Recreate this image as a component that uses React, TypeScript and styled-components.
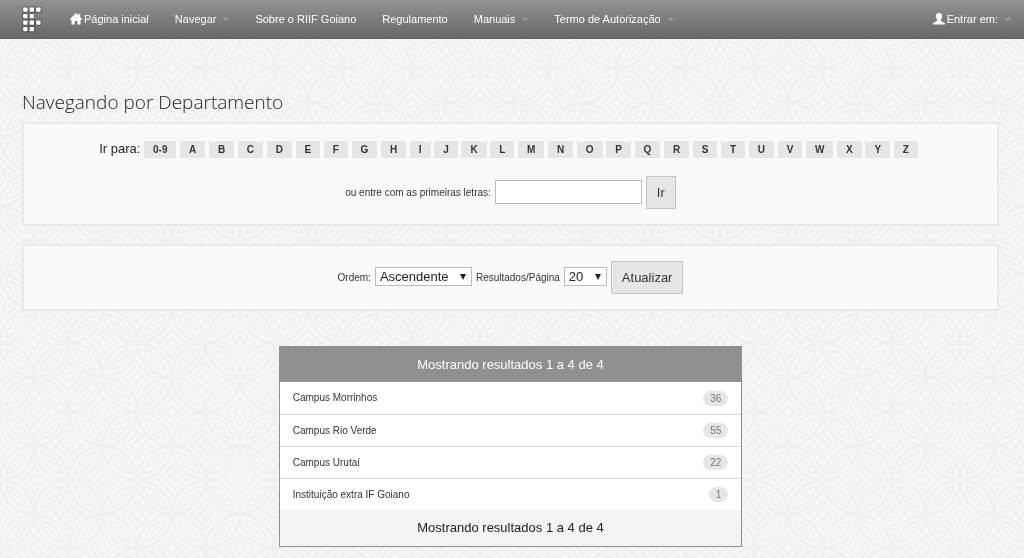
import React from "react";
import styled, { createGlobalStyle } from "styled-components";

const GlobalStyle = createGlobalStyle`
  *, *::before, *::after { box-sizing: border-box; }
  body {
    margin: 0;
    background: #f5f6f8;
    color: #333;
    font-family: "Liberation Sans", Helvetica, Arial, sans-serif;
    font-size: 13px;
    line-height: 18px;
  }
  a { color: inherit; text-decoration: none; }
  button, input, select { font: inherit; color: inherit; margin: 0; }
`;

/* ---------- background ornament ---------- */

const TILE = 68.57;
const HALF = TILE / 2;
const DARK = "#eff0f2";
const LIGHT = "#f6f7f9";

/* Petal shared by two circles of radius r whose centres are diagonal neighbours. */
function petal(ax: number, ay: number, bx: number, by: number, r: number) {
  const mx = (ax + bx) / 2;
  const my = (ay + by) / 2;
  const d = Math.hypot(bx - ax, by - ay);
  if (r <= d / 2) return "";
  const h = Math.sqrt(r * r - (d * d) / 4);
  const px = (-(by - ay) / d) * h;
  const py = ((bx - ax) / d) * h;
  const f = (n: number) => n.toFixed(2);
  return `M${f(mx + px)} ${f(my + py)}A${f(r)} ${f(r)} 0 0 1 ${f(mx - px)} ${f(my - py)}A${f(r)} ${f(r)} 0 0 1 ${f(mx + px)} ${f(my + py)}Z`;
}

/* One path per petal: overlapping petals must stay filled. */
function petals(r: number) {
  const parts: string[] = [];
  for (let i = -3; i <= 5; i++) {
    for (let j = -3; j <= 5; j++) {
      if ((i + j) % 2 === 0) continue;
      const x = i * HALF;
      const y = j * HALF;
      parts.push(petal(x, y, x + HALF, y + HALF, r));
      parts.push(petal(x, y, x + HALF, y - HALF, r));
    }
  }
  return parts.join("");
}

const BANDS: [number, string][] = [
  [45.6, DARK],
  [43.2, LIGHT],
  [40.6, DARK],
  [38.2, LIGHT],
  [35.8, DARK],
  [32.4, LIGHT],
  [30, DARK],
  [27.6, LIGHT],
  [25.4, DARK],
];

const Backdrop = styled.svg`
  position: fixed;
  inset: 0;
  width: 100%;
  height: 100%;
  z-index: -1;
`;

function Ornament() {
  return (
    <Backdrop aria-hidden="true">
      <defs>
        <pattern id="ornament" width={TILE} height={TILE} patternUnits="userSpaceOnUse">
          <rect width={TILE} height={TILE} fill={LIGHT} />
          {BANDS.map(([r, fill]) => (
            <path key={r} d={petals(r)} fill={fill} fillRule="nonzero" />
          ))}
        </pattern>
      </defs>
      <rect width="100%" height="100%" fill="url(#ornament)" />
    </Backdrop>
  );
}

/* ---------- navigation ---------- */

const Navbar = styled.header`
  display: flex;
  align-items: center;
  height: 39px;
  padding-left: 22px;
  background: linear-gradient(#929292, #686868);
  border-bottom: 1px solid #626266;
  color: #fff;
  font-size: 11px;
`;

const Brand = styled.a`
  display: flex;
  margin-right: 14px;
`;

const Menu = styled.nav`
  display: flex;
  flex: 1;
`;

const MenuLink = styled.a<{ $right?: boolean }>`
  display: flex;
  align-items: center;
  padding: 0 13px;
  white-space: nowrap;
  margin-left: ${(p) => (p.$right ? "auto" : "0")};
  svg { margin-right: 2px; }
`;

const Caret = styled.span`
  margin-left: 7px;
  border: 3px solid transparent;
  border-top-color: #a0a0a0;
  border-bottom: 0;
`;

const LOGO_ROWS = [3, 2, 3, 2];

function Logo() {
  const cells = LOGO_ROWS.flatMap((n, row) => Array.from({ length: n }, (_, col) => ({ row, col })));
  return (
    <svg width="21" height="27" viewBox="0 0 21 27" role="img" aria-label="RIIF Goiano">
      {cells.map(({ row, col }) => (
        <rect key={`s${row}${col}`} x={0.2 + col * 6.5} y={0.6 + row * 6.5} width="6.4" height="6.4" rx="1" fill="#4c4c4c" opacity="0.6" />
      ))}
      {cells.map(({ row, col }) => (
        <rect key={`c${row}${col}`} x={1.2 + col * 6.5} y={1.5 + row * 6.5} width="4.3" height="4.3" rx="0.7" fill="#fff" />
      ))}
    </svg>
  );
}

const HomeIcon = () => (
  <svg width="12" height="12" viewBox="0 0 12 12" fill="#fff" aria-hidden="true">
    <path d="M6 0 0 6v.8h1.500V11.500h3.200V8h2.600v3.500h3.200V6.800H12V6L10.200 4.200V1H8.500v1.500z" />
  </svg>
);

const UserIcon = () => (
  <svg width="12" height="12" viewBox="0 0 12 12" fill="#fff" aria-hidden="true">
    <path d="M6 0C4 0 3 1.200 3 3.200c0 1.500.500 2.700 1.300 3.500.3.400.2 1-.3 1.300L1 9.400c-.7.400-1 .8-1 1.400v.7h12v-.7c0-.6-.3-1-1-1.400L8 8c-.5-.3-.6-.9-.3-1.300C8.500 5.900 9 4.700 9 3.200 9 1.200 8 0 6 0z" />
  </svg>
);

/* ---------- content ---------- */

const Page = styled.main`
  padding: 51px 25px 11px 22px;
`;

const Title = styled.h1`
  margin: 0 0 8px;
  color: #222;
  font: 300 19px/24px "Open Sans", sans-serif;
`;

const Well = styled.form`
  margin-bottom: 18px;
  padding: 15px;
  background: #fafafa;
  border: 2px solid #e9eaeb;
  text-align: center;
`;

const Letters = styled.div`
  margin: 1px 0 18px;
  padding-right: 4px;
  color: #222;
`;

const Letter = styled.a`
  display: inline-block;
  padding: 0 9px;
  background: #e6e6e6;
  color: #333;
  font-size: 10px;
  font-weight: bold;
  line-height: 17px;
`;

const Controls = styled.div`
  display: flex;
  align-items: center;
  justify-content: center;
  gap: 4px;
  font-size: 10px;
`;

const TextBox = styled.input`
  width: 147px;
  height: 24px;
  margin-bottom: 2px;
  padding: 0 4px;
  background: #fff;
  border: 1px solid #bbb;
`;

const arrow = encodeURIComponent(
  '<svg xmlns="http://www.w3.org/2000/svg" width="6" height="6"><path d="M0 0h6L3 6z" fill="#222"/></svg>'
);

const Select = styled.select<{ $wide?: boolean }>`
  appearance: none;
  width: ${(p) => (p.$wide ? "97px" : "43px")};
  height: 19px;
  margin-bottom: 2px;
  padding: 0 4px;
  background: #fff url("data:image/svg+xml,${arrow}") no-repeat right 5px center;
  border: 1px solid #bbb;
  border-radius: 0;
  color: #222;
  font-size: 13px;
  line-height: 17px;
`;

const Button = styled.button`
  height: 33px;
  padding: 0 10px;
  background: #e6e6e6;
  border: 1px solid #c4c4c4;
  font-size: 13px;
`;

const Panel = styled.section`
  width: calc(50% - 25px);
  margin: 35px auto 0;
  background: #fff;
  border: 1px solid #909090;
`;

const PanelHead = styled.h2`
  margin: 0;
  background: #909090;
  color: #fff;
  font-size: 13px;
  font-weight: normal;
  line-height: 35px;
  text-align: center;
`;

const PanelFoot = styled.div`
  background: #f4f4f4;
  color: #222;
  line-height: 36px;
  text-align: center;
`;

const List = styled.ul`
  margin: 0;
  padding: 0;
  list-style: none;
`;

const Item = styled.li`
  display: flex;
  align-items: center;
  justify-content: space-between;
  min-height: 32px;
  padding: 0 13px;
  font-size: 10px;
  & + & { border-top: 1px solid #d6d6d6; }
`;

const Badge = styled.span`
  padding: 0 7px;
  background: #e6e6e6;
  border-radius: 8px;
  color: #777;
  line-height: 15px;
`;

const LETTERS = ["0-9", ..."ABCDEFGHIJKLMNOPQRSTUVWXYZ"];

const DEPARTMENTS = [
  { name: "Campus Morrinhos", count: 36 },
  { name: "Campus Rio Verde", count: 55 },
  { name: "Campus Urutaí", count: 22 },
  { name: "Instituição extra IF Goiano", count: 1 },
];

export default function App() {
  const summary = "Mostrando resultados 1 a 4 de 4";
  const hold = (e: React.FormEvent) => e.preventDefault();
  return (
    <>
      <GlobalStyle />
      <Ornament />
      <Navbar>
        <Brand href="#"><Logo /></Brand>
        <Menu>
          <MenuLink href="#"><HomeIcon />Página inicial</MenuLink>
          <MenuLink href="#">Navegar<Caret /></MenuLink>
          <MenuLink href="#">Sobre o RIIF Goiano</MenuLink>
          <MenuLink href="#">Regulamento</MenuLink>
          <MenuLink href="#">Manuais<Caret /></MenuLink>
          <MenuLink href="#">Termo de Autorização<Caret /></MenuLink>
          <MenuLink href="#" $right><UserIcon />Entrar em:<Caret /></MenuLink>
        </Menu>
      </Navbar>
      <Page>
        <Title>Navegando por Departamento</Title>
        <Well onSubmit={hold}>
          <Letters>
            Ir para:{" "}
            {LETTERS.map((l) => (
              <React.Fragment key={l}>
                <Letter href="#">{l}</Letter>{" "}
              </React.Fragment>
            ))}
          </Letters>
          <Controls>
            <label htmlFor="starts">ou entre com as primeiras letras:</label>
            <TextBox id="starts" type="text" />
            <Button type="submit">Ir</Button>
          </Controls>
        </Well>
        <Well onSubmit={hold}>
          <Controls>
            <label htmlFor="order">Ordem:</label>
            <Select id="order" $wide defaultValue="asc">
              <option value="asc">Ascendente</option>
              <option value="desc">Descendente</option>
            </Select>
            <label htmlFor="rpp">Resultados/Página</label>
            <Select id="rpp" defaultValue="20">
              <option>5</option>
              <option>10</option>
              <option>20</option>
              <option>50</option>
            </Select>
            <Button type="submit">Atualizar</Button>
          </Controls>
        </Well>
        <Panel>
          <PanelHead>{summary}</PanelHead>
          <List>
            {DEPARTMENTS.map((d) => (
              <Item key={d.name}>
                <a href="#">{d.name}</a>
                <Badge>{d.count}</Badge>
              </Item>
            ))}
          </List>
          <PanelFoot>{summary}</PanelFoot>
        </Panel>
      </Page>
    </>
  );
}
